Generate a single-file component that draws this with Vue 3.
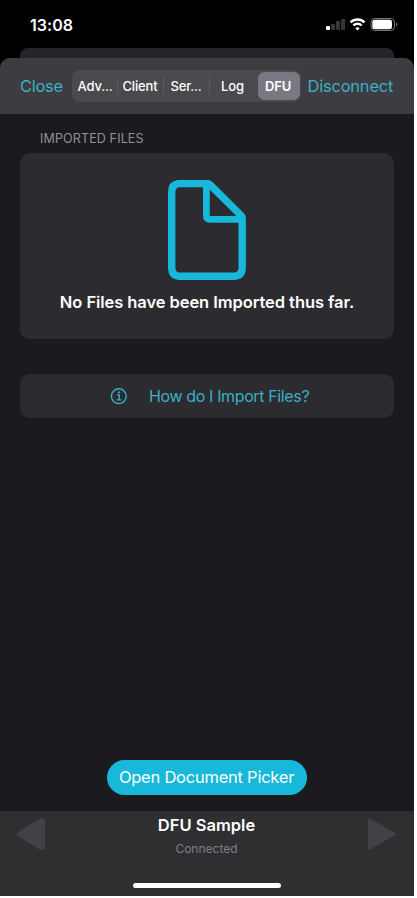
<script setup>
import { ref } from 'vue'

const tabs = ['Adv...', 'Client', 'Ser...', 'Log', 'DFU']
const active = ref('DFU')
</script>

<template>
  <div class="phone">
    <header class="status">
      <span class="time">13:08</span>
      <svg class="signals" width="74" height="16" viewBox="0 0 74 16">
        <rect x="0" y="9" width="4" height="4" rx="1" fill="#fff" />
        <g fill="#363638">
          <rect x="5" y="7" width="4" height="6" rx="1" />
          <rect x="10" y="4" width="4" height="9" rx="1" />
          <rect x="15" y="2" width="4" height="11" rx="1" />
        </g>
        <g fill="none" stroke="#fff" stroke-width="2.4">
          <path d="M24.5 5.4a9.8 9.8 0 0 1 14 0" />
          <path d="M27.4 8.5a5.8 5.8 0 0 1 8.2 0" />
        </g>
        <path d="M31.5 13.5l-2.2-2.3a3.2 3.2 0 0 1 4.4 0z" fill="#fff" />
        <rect x="45" y="1.5" width="23.5" height="12" rx="3.6" fill="none" stroke="#77777a" />
        <rect x="46.3" y="2.8" width="19.7" height="9.4" rx="2.2" fill="#fff" />
        <path d="M70 5.4c1.8.7 1.8 3.4 0 4.1z" fill="#77777a" />
      </svg>
    </header>
    <div class="behind"></div>
    <section class="sheet">
      <nav class="bar">
        <a class="close">Close</a>
        <div class="segments">
          <button
            v-for="(tab, i) in tabs"
            :key="tab"
            :class="['segment', { active: tab === active, divided: i < 3 }]"
            @click="active = tab"
          ><span>{{ tab }}</span></button>
        </div>
        <a class="disconnect">Disconnect</a>
      </nav>
      <main class="content">
        <h2 class="caption"><span>IMPORTED FILES</span></h2>
        <div class="card">
          <svg width="78" height="100" viewBox="0 0 78 100" fill="none" stroke="#17b8da" stroke-linejoin="round">
            <path d="M12 3.6H39.5Q41 3.6 42.2 4.8L73 35.5Q74.2 36.8 74.2 39V87.5Q74.2 96.2 65.5 96.2H12Q3.7 96.2 3.7 87.5V12Q3.7 3.6 12 3.6Z" stroke-width="7.4" />
            <path d="M38.4 4V35.5Q38.4 39.4 42.3 39.4H73" stroke-width="6.8" />
          </svg>
          <p class="empty">No Files have been Imported thus far.</p>
        </div>
        <div class="help">
          <svg width="18" height="18" viewBox="0 0 18 18" fill="none" stroke="#3aafc8" stroke-width="1.4">
            <circle cx="8.8" cy="9.2" r="7.4" />
            <path d="M7 7.9H9.2V12.8M6.7 12.9H11.3" />
            <circle cx="8.9" cy="5.3" r="1.1" fill="#3aafc8" stroke="none" />
          </svg>
          <span class="question">How do I Import Files?</span>
        </div>
        <button class="picker"><span>Open Document Picker</span></button>
      </main>
      <footer class="footer">
        <div class="device">
          <svg class="arrow" width="30" height="34" viewBox="0 0 30 34">
            <path d="M25 1.5H29V32.5H25Q23 32.5 21 31L2.5 19.5Q-.5 17 2.5 14.5L21 3Q23 1.5 25 1.5Z" fill="#414146" />
          </svg>
          <div class="names">
            <strong>DFU Sample</strong>
            <span>Connected</span>
          </div>
          <svg class="arrow" width="30" height="34" viewBox="0 0 30 34">
            <path d="M4 2L27.5 15.5Q30 17 27.5 18.5L4 32Q1 33.5 1 30.5V3.5Q1 .5 4 2Z" fill="#414146" />
          </svg>
        </div>
        <div class="home"></div>
      </footer>
    </section>
  </div>
</template>

<style>
body {
  background: #fff;
  overflow: hidden;
}
</style>

<style scoped>
* {
  box-sizing: border-box;
}
.phone {
  width: 414px;
  height: 896px;
  display: flex;
  flex-direction: column;
  background: #000;
  color: #fff;
  font-family: Inter, "Liberation Sans", sans-serif;
  white-space: nowrap;
  overflow: hidden;
}
button {
  font: inherit;
  color: inherit;
  border: 0;
  padding: 0;
  background: none;
}
.status {
  height: 48px;
  flex: none;
  display: flex;
  justify-content: space-between;
  padding: 15px 14px 0 30px;
}
.time {
  font-size: 16px;
  line-height: 20px;
  font-weight: 600;
  letter-spacing: 0.05px;
}
.signals {
  margin-top: 2px;
}
.behind {
  height: 10px;
  flex: none;
  margin: 0 20px;
  background: #252428;
  border-radius: 8px 8px 0 0;
}
.sheet {
  flex: 1;
  display: flex;
  flex-direction: column;
  background: #1b1a1e;
  border-radius: 10px 10px 0 0;
  overflow: hidden;
}
.bar {
  height: 56px;
  flex: none;
  display: flex;
  align-items: center;
  padding: 0 20px;
  background: #3d3c40;
  font-size: 16.5px;
  color: #3aafc8;
}
.close {
  width: 52px;
  letter-spacing: -0.3px;
}
.segments {
  width: 229px;
  height: 32px;
  display: grid;
  grid-template-columns: 44px 46px 46px 48px 42px;
  padding: 2px 1px 2px 2px;
  border-radius: 8px;
  background: #4a494e;
  color: #fff;
  font-size: 13px;
  font-weight: 500;
}
.segment {
  display: flex;
  align-items: center;
  justify-content: center;
  border-radius: 6.5px;
  padding-right: 2px;
  letter-spacing: -0.15px;
}
.segment:nth-child(4) {
  padding-right: 3px;
}
.segment.divided {
  border-radius: 0;
  background: linear-gradient(#5b5a60, #5b5a60) right center / 1px 18px no-repeat;
}
.segment.active {
  background: #7a7983;
  font-weight: 600;
}
.disconnect {
  margin-left: 6.5px;
  letter-spacing: -0.22px;
}
.content {
  flex: 1;
  display: flex;
  flex-direction: column;
  padding: 0 20px 16px;
}
.caption {
  margin: 17px 0 6px 20px;
  font-size: 12.5px;
  line-height: 16px;
  font-weight: 400;
  letter-spacing: 0.14px;
  color: #929197;
}
.card {
  height: 186px;
  display: flex;
  flex-direction: column;
  align-items: center;
  padding-top: 27px;
  border-radius: 10px;
  background: #2c2b2f;
}
.empty {
  margin: 11px 0 0;
  font-size: 16.5px;
  line-height: 22px;
  font-weight: 600;
  letter-spacing: -0.07px;
}
.help {
  height: 44px;
  margin-top: 35px;
  display: flex;
  align-items: center;
  padding-left: 90px;
  gap: 21px;
  border-radius: 10px;
  background: #2c2b2f;
  color: #3aafc8;
  font-size: 16px;
  letter-spacing: -0.37px;
}
.picker {
  width: 200px;
  height: 35px;
  margin: auto auto 0;
  padding: 0 1px 1px 0;
  border-radius: 18px;
  background: #17b8da;
  font-size: 16.5px;
  letter-spacing: -0.24px;
}
.footer {
  height: 85px;
  flex: none;
  background: #2f2e31;
  display: flex;
  flex-direction: column;
  align-items: center;
}
.device {
  width: 100%;
  height: 72px;
  display: flex;
  justify-content: space-between;
  padding: 3px 17px 0 16px;
}
.arrow {
  margin-top: 3px;
}
.names {
  display: flex;
  flex-direction: column;
  align-items: center;
}
.names strong {
  font-size: 16.5px;
  line-height: 22px;
  font-weight: 600;
}
.names span {
  margin-top: 5px;
  font-size: 12px;
  line-height: 16px;
  color: #7d828a;
}
.home {
  width: 148px;
  height: 5px;
  flex: none;
  border-radius: 3px;
  background: #fff;
}
</style>
